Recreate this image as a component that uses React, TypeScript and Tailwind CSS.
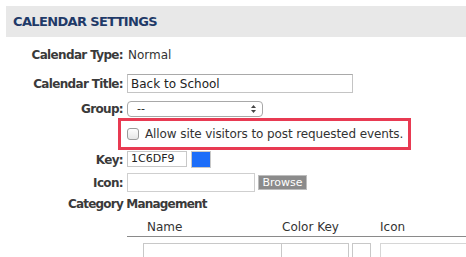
import React from 'react';

const font = { fontFamily: '"DejaVu Sans", Verdana, sans-serif' };

function Label({ children }: { children: React.ReactNode }) {
  return (
    <div className="w-[117px] shrink-0 text-right text-[12px] font-bold text-[#3a3a3a] tracking-[-0.65px] whitespace-nowrap">
      {children}
    </div>
  );
}

export default function App() {
  return (
    <div className="w-[466px] h-[257px] overflow-hidden bg-white pl-[6px] pt-[6px]" style={font}>
      {/* header band */}
      <div className="h-[31px] bg-[#e8e8e8] flex items-center pl-[7px]">
        <h1 className="text-[13px] font-bold text-[#1f3a68] tracking-[-0.65px]">CALENDAR SETTINGS</h1>
      </div>

      {/* calendar type */}
      <div className="mt-[8px] h-[20px] flex items-center">
        <Label>Calendar Type:</Label>
        <span className="ml-[5px] text-[12px] text-[#333]">Normal</span>
      </div>

      {/* title */}
      <div className="mt-[9px] h-[19px] flex items-center">
        <Label>Calendar Title:</Label>
        <div className="ml-[4px] w-[226px] h-[19px] border border-[#c4c4c4] border-t-[#a9a9a9] flex items-center px-[3px] text-[12px] text-[#222]">
          Back to School
        </div>
      </div>

      {/* group */}
      <div className="mt-[8px] h-[16px] flex items-center">
        <Label>Group:</Label>
        <div className="ml-[4px] w-[136px] h-[16px] rounded-[4px] border border-[#a8a8a8] bg-white flex items-center justify-between pl-[9px] pr-[5px] text-[11px] text-[#222]">
          <span>--</span>
          <svg width="7" height="10" viewBox="0 0 7 10">
            <path d="M3.5 1 L6 4 L1 4 Z" fill="#444" />
            <path d="M3.5 9 L6 6 L1 6 Z" fill="#444" />
          </svg>
        </div>
      </div>

      {/* highlighted checkbox */}
      <div className="mt-[1px] ml-[112px] w-[293px] h-[32px] border-[3px] border-[#e83a52] flex items-center pl-[6px]">
        <span className="w-[12px] h-[12px] rounded-[3px] border border-[#9b9b9b] bg-gradient-to-b from-[#fdfdfd] to-[#e6e6e6] shrink-0" />
        <span className="ml-[6px] text-[12px] tracking-[-0.1px] text-[#333] whitespace-nowrap">Allow site visitors to post requested events.</span>
      </div>

      {/* key */}
      <div className="mt-[1px] h-[17px] flex items-center">
        <Label>Key:</Label>
        <div className="ml-[4px] w-[60px] h-[16px] self-start border border-[#c8c8c8] flex items-center px-[3px] text-[11px] text-[#222]">
          1C6DF9
        </div>
        <div className="ml-[4px] w-[20px] h-[17px] bg-[#1c6df9] border border-[#c8c8c8]" />
      </div>

      {/* icon */}
      <div className="mt-[5px] h-[19px] flex items-center">
        <Label>Icon:</Label>
        <div className="ml-[4px] w-[128px] h-[19px] border border-[#cfcfcf]" />
        <button className="ml-[3px] w-[49px] h-[15px] bg-[#8b8b8b] border border-[#bdbdbd] text-white text-[11px] leading-none flex items-center justify-center">
          Browse
        </button>
      </div>

      {/* category management */}
      <div className="mt-[4px] h-[16px] flex items-center pl-[62px]">
        <span className="text-[12px] font-bold text-[#3a3a3a] tracking-[-0.8px] whitespace-nowrap">Category Management</span>
      </div>

      {/* category table */}
      <div className="mt-[6px] ml-[121px]">
        <div className="h-[19px] flex items-center border-b border-[#8a8a8a] text-[12px] text-[#333]">
          <span className="ml-[20px] w-[135px]">Name</span>
          <span className="w-[98px]">Color Key</span>
          <span>Icon</span>
        </div>
        <div className="mt-[6px] flex">
          <div className="shrink-0 ml-[16px] w-[139px] h-[22px] border border-[#c8c8c8]" />
          <div className="shrink-0 w-[67px] h-[22px] border border-l-0 border-[#c8c8c8]" />
          <div className="shrink-0 ml-[3px] w-[19px] h-[22px] border border-[#c8c8c8]" />
          <div className="shrink-0 ml-[9px] w-[100px] h-[22px] border border-[#d6d6d6]" />
        </div>
      </div>
    </div>
  );
}
